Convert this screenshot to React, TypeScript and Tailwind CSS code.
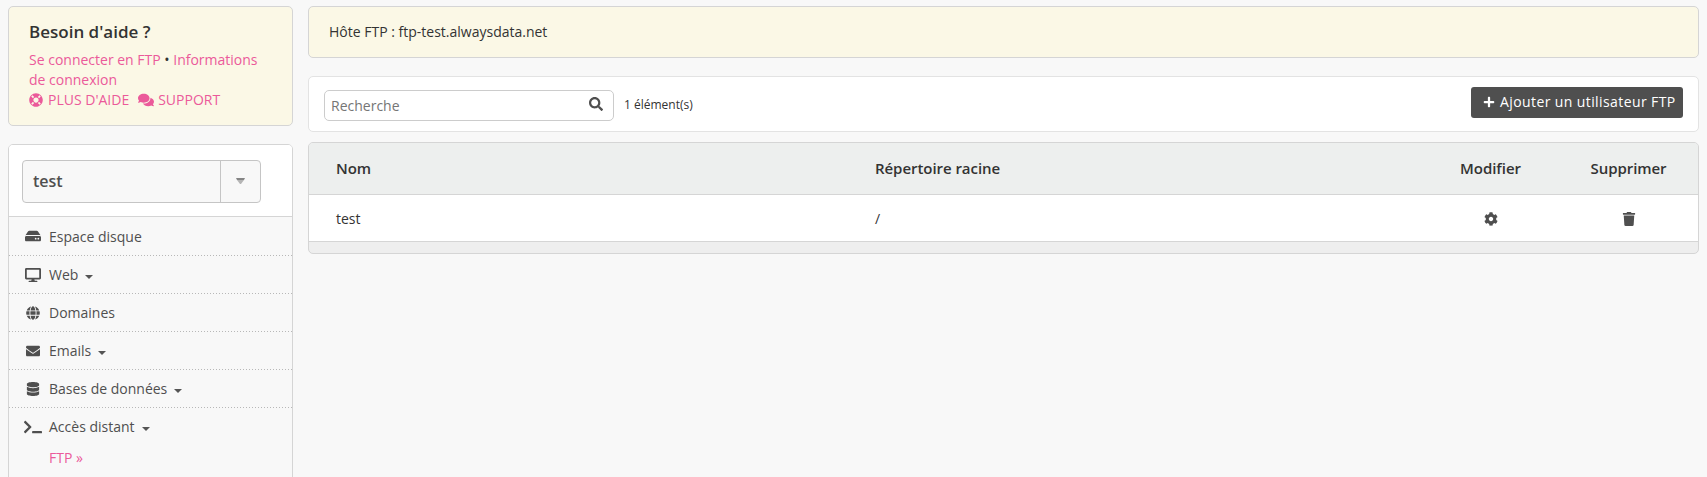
import React from "react";
import {
  FaLifeRing, FaComments, FaHdd, FaGlobe, FaEnvelope, FaDatabase,
  FaTerminal, FaCog, FaTrash, FaPlus, FaSearch, FaDesktop,
} from "react-icons/fa";

type NavItem = { label: string; icon: React.ReactNode; menu?: boolean };

const items: NavItem[] = [
  { label: "Espace disque", icon: <FaHdd size={16} /> },
  { label: "Web", icon: <FaDesktop size={16} />, menu: true },
  { label: "Domaines", icon: <FaGlobe size={14} /> },
  { label: "Emails", icon: <FaEnvelope size={14} />, menu: true },
  { label: "Bases de données", icon: <FaDatabase size={14} />, menu: true },
  { label: "Accès distant", icon: <FaTerminal size={18} />, menu: true },
];

function Caret() {
  return (
    <svg className="ml-[7px] mt-[5px]" width="8" height="4" viewBox="0 0 8 4" fill="#555">
      <path d="M0 0h8L4 4z" />
    </svg>
  );
}

function Sidebar() {
  return (
    <aside className="flex w-[285px] shrink-0 flex-col gap-[18px] text-[14px]">
      <section className="h-[120px] shrink-0 rounded-[5px] border border-[#d5d5d5] bg-[#fbf8e6] px-5 pt-[13px] leading-5 text-[#eb5a9a]">
        <h2 className="mb-[10px] text-[17px] font-semibold leading-6 text-[#333]">Besoin d'aide ?</h2>
        <p className="-mt-1 whitespace-nowrap">
          Se connecter en FTP <span className="text-[#333]">•</span> Informations
          <br />
          de connexion
        </p>
        <div className="flex items-center whitespace-nowrap">
          <FaLifeRing size={14} />
          <span className="ml-[5px]">PLUS D'AIDE</span>
          <FaComments className="ml-[9px]" size={16} />
          <span className="ml-[4px]">SUPPORT</span>
        </div>
      </section>
      <nav className="h-[400px] shrink-0 rounded-t-[5px] border border-[#d5d5d5] text-[#4f4f4f]">
        <div className="h-[71px] rounded-t-[4px] bg-white pl-[13px] pt-[15px]">
          <div className="flex h-[43px] w-[239px] rounded-[4px] border border-[#c5c5c5] bg-[#f8f8f8]">
            <span className="flex-1 pl-[10px] text-[16px] font-semibold leading-[40px]">test</span>
            <span className="flex w-[40px] items-center justify-center border-l border-[#c5c5c5]">
              <svg className="-mt-[2px]" width="9" height="6" viewBox="0 0 9 6">
                <path d="M0 0h9L8 2H1z" fill="#858585" />
                <path d="M1 2h7L5 6H4z" fill="#b5b5b5" />
              </svg>
            </span>
          </div>
        </div>
        <ul className="border-t border-[#d5d5d5]">
          {items.map((item, i) => (
            <React.Fragment key={item.label}>
              {i > 0 && (
                <li
                  aria-hidden="true"
                  className="h-px bg-[repeating-linear-gradient(90deg,#b8b8b8_0_1px,transparent_1px_3px)]"
                />
              )}
              <li className={`flex items-center pl-[14px] ${i === 0 ? "h-[38px]" : "h-[37px]"}`}>
                <span className="flex w-5 justify-center">{item.icon}</span>
                <span className="ml-[6px]">{item.label}</span>
                {item.menu && <Caret />}
              </li>
            </React.Fragment>
          ))}
        </ul>
        <div className="pl-10 pt-[3px] leading-5 text-[#eb5a9a]">FTP »</div>
      </nav>
    </aside>
  );
}

export default function App() {
  return (
    <div className="flex h-[477px] gap-[15px] overflow-hidden bg-[#f8f8f8] pl-2 pr-2 pt-[6px] font-['Open_Sans',sans-serif] text-[14px] text-[#333]">
      <Sidebar />
      <main className="w-[1391px] shrink-0">
        <div className="h-[52px] rounded-[5px] border border-[#d5d5d5] bg-[#fbf8e6] pl-5 leading-[50px]">
          Hôte FTP : ftp-test.alwaysdata.net
        </div>
        <div className="mt-[18px] flex h-[56px] rounded-[5px] border border-[#e3e3e3] bg-white pl-[15px] pr-[15px]">
          <div className="mt-[13px] flex h-[31px] w-[290px] justify-between rounded-[5px] border border-[#ccc] pl-[6px] pr-[10px] leading-[30px] text-[#757575]">
            <span>Recherche</span>
            <FaSearch className="mt-[6px] text-[#4f4f4f]" size={14} />
          </div>
          <span className="ml-[10px] mt-[18px] text-[12px] leading-5">1 élément(s)</span>
          <button className="ml-auto mt-[10px] flex h-[31px] w-[212px] items-center whitespace-nowrap rounded-[3px] bg-[#4f4f4f] pb-[2px] pl-[12px] leading-5 tracking-[0.4px] text-white">
            <FaPlus size={12} />
            <span className="ml-[5px]">Ajouter un utilisateur FTP</span>
          </button>
        </div>
        <div className="mt-[10px] h-[112px] overflow-hidden rounded-[5px] border border-[#d5d5d5] bg-[#eee]">
          <div className="grid h-[52px] grid-cols-[539px_574px_137px_139px] items-center border-b border-[#d5d5d5] bg-[#edefee] text-[15px] font-semibold tracking-[-0.05px]">
            <span className="pl-[27px]">Nom</span>
            <span className="pl-[27px]">Répertoire racine</span>
            <span className="text-center">Modifier</span>
            <span className="text-center">Supprimer</span>
          </div>
          <div className="grid h-[47px] grid-cols-[539px_574px_137px_139px] items-center border-b border-[#d5d5d5] bg-white">
            <span className="pl-[27px]">test</span>
            <span className="pl-[27px]">/</span>
            <span className="flex justify-center text-[#4f4f4f]"><FaCog className="mt-px" size={14} /></span>
            <span className="flex justify-center text-[#4f4f4f]"><FaTrash className="mt-px" size={14} /></span>
          </div>
        </div>
      </main>
    </div>
  );
}
